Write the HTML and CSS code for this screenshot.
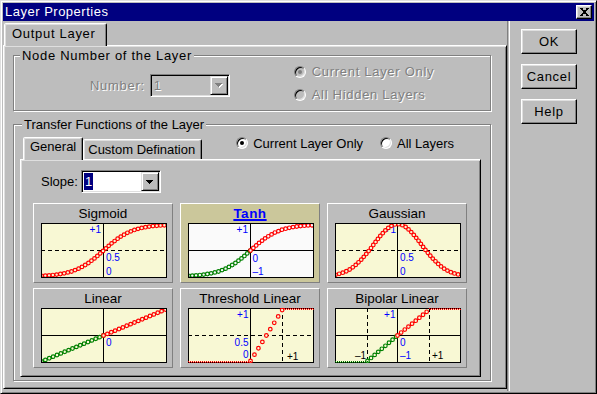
FILE: index.html
```html
<!DOCTYPE html>
<html lang="en">
<head>
<meta charset="utf-8">
<title>Layer Properties</title>
<link rel="stylesheet" href="styles.css">
</head>
<body>
<div class="window">
  <div class="titlebar">
    <span class="title">Layer Properties</span>
    <span class="close"><svg width="9" height="8" viewBox="0 0 9 8" class="px"><path d="M0 0h3v1H0zM6 0h3v1H6zM1 1h2v1H1zM6 1h2v1H6zM2 2h5v1H2zM3 3h3v2H3zM2 5h5v1H2zM1 6h2v1H1zM6 6h2v1H6zM0 7h3v1H0zM6 7h3v1H6z"/></svg></span>
  </div>
  <div class="body">
    <div class="main">
      <div class="tabstrip"><div class="tab bm">Output Layer</div></div>
      <div class="panel">
        <div class="group g1">
          <div class="legend bm">Node Number of the Layer</div>
          <div class="g1row">
            <div class="numfield">
              <span class="dis bm">Number:</span>
              <div class="combo off">
                <span class="val dis">1</span>
                <span class="dd"><svg width="8" height="5" viewBox="0 0 8 5" class="px"><path fill="#fff" d="M1 1h7v1H1zM2 2h5v1H2zM3 3h3v1H3zM4 4h1v1H4z"/><path fill="#808080" d="M0 0h7v1H0zM1 1h5v1H1zM2 2h3v1H2zM3 3h1v1H3z"/></svg></span>
              </div>
            </div>
            <div class="radios">
              <div class="radio"><span class="rc off on"></span><span class="dis bm">Current Layer Only</span></div>
              <div class="radio"><span class="rc off"></span><span class="dis bm">All Hidden Layers</span></div>
            </div>
          </div>
        </div>
        <div class="group g2">
          <div class="legend">Transfer Functions of the Layer</div>
          <div class="itabs">
            <div class="itab sel">General</div>
            <div class="itab other">Custom Defination</div>
            <div class="iradio a"><span class="rc on"></span><span>Current Layer Only</span></div>
            <div class="iradio b"><span class="rc"></span><span>All Layers</span></div>
          </div>
          <div class="ipanel">
            <div class="slope">
              <span>Slope:</span>
              <div class="combo">
                <span class="val"><span class="hl">1</span></span>
                <span class="dd"><svg width="7" height="4" viewBox="0 0 7 4" class="px"><path d="M0 0h7v1H0zM1 1h5v1H1zM2 2h3v1H2zM3 3h1v1H3z"/></svg></span>
              </div>
            </div>
            <div class="grid">
              <div class="card">
                <div class="ctitle">Sigmoid</div>
                <svg class="chart" width="126" height="55" viewBox="0 0 126 55">
                  <path class="ax" d="M62.5 0V55"/>
                  <path class="ax dash" d="M0 27.5H126"/>
                  <text class="lbl" x="60" y="9.5" text-anchor="end">+1</text>
                  <text class="lbl" x="65" y="38">0.5</text>
                  <text class="lbl" x="65" y="52">0</text>
                  <polyline class="ring r" points="0.5,52.8 6.5,52.5 14.5,51.8 22.5,50.5 30.5,48.5 38.5,45.3 46.5,40.7 54.5,34.6 62.5,27.5 70.5,20.4 78.5,14.3 86.5,9.7 94.5,6.5 102.5,4.5 110.5,3.2 118.5,2.5 124.5,2.2"/>
                  <polyline class="hole" points="0.5,52.8 6.5,52.5 14.5,51.8 22.5,50.5 30.5,48.5 38.5,45.3 46.5,40.7 54.5,34.6 62.5,27.5 70.5,20.4 78.5,14.3 86.5,9.7 94.5,6.5 102.5,4.5 110.5,3.2 118.5,2.5 124.5,2.2"/>
                  <rect class="bd" x="0.5" y="0.5" width="125" height="54"/>
                </svg>
              </div>
              <div class="card on">
                <div class="ctitle"><span>Tanh</span></div>
                <svg class="chart" width="126" height="55" viewBox="0 0 126 55">
                  <path class="ax" d="M62.5 0V55"/>
                  <path class="ax" d="M0 27.5H126"/>
                  <text class="lbl" x="60" y="9.5" text-anchor="end">+1</text>
                  <text class="lbl" x="64.5" y="39">0</text>
                  <text class="lbl" x="64.5" y="52">–1</text>
                  <polyline class="ring g" points="0.5,52.8 6.5,52.5 14.5,51.8 22.5,50.5 30.5,48.5 38.5,45.3 46.5,40.7 54.5,34.6 62.5,27.5"/>
                  <polyline class="hole" points="0.5,52.8 6.5,52.5 14.5,51.8 22.5,50.5 30.5,48.5 38.5,45.3 46.5,40.7 54.5,34.6 62.5,27.5"/>
                  <polyline class="ring r" points="62.5,27.5 70.5,20.4 78.5,14.3 86.5,9.7 94.5,6.5 102.5,4.5 110.5,3.2 118.5,2.5 124.5,2.2"/>
                  <polyline class="hole" points="62.5,27.5 70.5,20.4 78.5,14.3 86.5,9.7 94.5,6.5 102.5,4.5 110.5,3.2 118.5,2.5 124.5,2.2"/>
                  <rect class="bd" x="0.5" y="0.5" width="125" height="54"/>
                </svg>
              </div>
              <div class="card">
                <div class="ctitle">Gaussian</div>
                <svg class="chart" width="126" height="55" viewBox="0 0 126 55">
                  <path class="ax" d="M62.5 0V55"/>
                  <path class="ax dash" d="M0 27.5H126"/>
                  <text class="lbl" x="61" y="9.5" text-anchor="end">+1</text>
                  <text class="lbl" x="65" y="38">0.5</text>
                  <text class="lbl" x="65" y="52">0</text>
                  <polyline class="ring r" points="0.5,51.8 6.5,50.2 10.5,48.7 14.5,46.6 18.5,43.8 22.5,40.3 26.5,36.4 30.5,31.9 34.5,27 38.5,21.7 42.5,16.4 46.5,11.5 50.5,7.2 54.5,3.9 58.5,1.7 62.5,1 66.5,1.7 70.5,3.9 74.5,7.2 78.5,11.5 82.5,16.4 86.5,21.7 90.5,27 94.5,31.9 98.5,36.4 102.5,40.3 106.5,43.8 110.5,46.6 114.5,48.7 118.5,50.2 124.5,51.8"/>
                  <polyline class="hole" points="0.5,51.8 6.5,50.2 10.5,48.7 14.5,46.6 18.5,43.8 22.5,40.3 26.5,36.4 30.5,31.9 34.5,27 38.5,21.7 42.5,16.4 46.5,11.5 50.5,7.2 54.5,3.9 58.5,1.7 62.5,1 66.5,1.7 70.5,3.9 74.5,7.2 78.5,11.5 82.5,16.4 86.5,21.7 90.5,27 94.5,31.9 98.5,36.4 102.5,40.3 106.5,43.8 110.5,46.6 114.5,48.7 118.5,50.2 124.5,51.8"/>
                  <rect class="bd" x="0.5" y="0.5" width="125" height="54"/>
                </svg>
              </div>
              <div class="card">
                <div class="ctitle">Linear</div>
                <svg class="chart" width="126" height="55" viewBox="0 0 126 55">
                  <path class="ax" d="M62.5 0V55"/>
                  <path class="ax" d="M0 27.5H126"/>
                  <text class="lbl" x="65" y="38">0</text>
                  <path class="ring g lin" d="M0.5 53.5L62.5 27.5"/>
                  <path class="hole lin" d="M0.5 53.5L62.5 27.5"/>
                  <path class="ring r lin" d="M62.5 27.5L124.5 1.5"/>
                  <path class="hole lin" d="M62.5 27.5L124.5 1.5"/>
                  <rect class="bd" x="0.5" y="0.5" width="125" height="54"/>
                </svg>
              </div>
              <div class="card">
                <div class="ctitle">Threshold Linear</div>
                <svg class="chart" width="126" height="55" viewBox="0 0 126 55">
                  <path class="ax" d="M62.5 0V55"/>
                  <path class="ax dash" d="M0 27.5H126"/>
                  <path class="ax dash" d="M94.5 0V55"/>
                  <text class="lbl" x="60.5" y="10" text-anchor="end">+1</text>
                  <text class="lbl" x="60.5" y="38" text-anchor="end">0.5</text>
                  <text class="lbl" x="60.5" y="50" text-anchor="end">0</text>
                  <text class="lbl k" x="99" y="52">+1</text>
                  <rect class="bd" x="0.5" y="0.5" width="125" height="54"/>
                  <path class="ring r thr" d="M62.5 53L94.5 1.5"/>
                  <path class="hole thr" d="M62.5 53L94.5 1.5"/>
                  <path class="chk r" d="M0 53.5H63"/>
                  <path class="chk r o" d="M0 54.5H63"/>
                  <path class="chk r" d="M94 0.5H126"/>
                  <path class="chk r o" d="M94 1.5H126"/>
                </svg>
              </div>
              <div class="card">
                <div class="ctitle">Bipolar Linear</div>
                <svg class="chart" width="126" height="55" viewBox="0 0 126 55">
                  <path class="ax" d="M62.5 0V55"/>
                  <path class="ax" d="M0 27.5H126"/>
                  <path class="ax dash" d="M32.5 0V55"/>
                  <path class="ax dash" d="M94.5 0V55"/>
                  <text class="lbl" x="60.5" y="10" text-anchor="end">+1</text>
                  <text class="lbl" x="65" y="38">0</text>
                  <text class="lbl" x="65" y="51">–1</text>
                  <text class="lbl k" x="31" y="51" text-anchor="end">–1</text>
                  <text class="lbl k" x="97" y="51">+1</text>
                  <rect class="bd" x="0.5" y="0.5" width="125" height="54"/>
                  <path class="ring g bip" d="M32.5 53L62.5 27.5"/>
                  <path class="hole bip" d="M32.5 53L62.5 27.5"/>
                  <path class="ring r bip" d="M62.5 27.5L94.5 1.5"/>
                  <path class="hole bip" d="M62.5 27.5L94.5 1.5"/>
                  <path class="chk g" d="M0 53.5H33"/>
                  <path class="chk g o" d="M0 54.5H33"/>
                  <path class="chk r" d="M94 0.5H126"/>
                  <path class="chk r o" d="M94 1.5H126"/>
                </svg>
              </div>
            </div>
          </div>
        </div>
      </div>
    </div>
    <div class="side">
      <div class="btn bm">OK</div>
      <div class="btn bm">Cancel</div>
      <div class="btn bm">Help</div>
    </div>
  </div>
</div>
</body>
</html>
```

FILE: styles.css
```css
* { box-sizing: border-box; }
html, body { margin: 0; padding: 0; }
body {
  width: 597px; height: 394px; overflow: hidden;
  background: #bdbdbd;
  font-family: "Liberation Sans", Arial, sans-serif;
  font-size: 13px; color: #000;
}
.window {
  width: 597px; height: 394px;
  display: flex; flex-direction: column;
  border: 1px solid; border-color: #dfdfdf #000 #000 #dfdfdf;
  box-shadow: inset 1px 1px #fff, inset -1px -1px #808080;
  padding: 2px;
}
.px { display: block; shape-rendering: crispEdges; }
.bm { letter-spacing: .7px; }
.dis { color: #808080; text-shadow: 1px 1px 0 #fff; }

/* title bar */
.titlebar {
  height: 18px; flex: none;
  display: flex; align-items: center; justify-content: space-between;
  background: #000080; color: #fff;
  padding: 0 2px; line-height: 18px; letter-spacing: .5px;
}
.close {
  width: 16px; height: 14px;
  background: #bdbdbd;
  border: 1px solid; border-color: #fff #000 #000 #fff;
  box-shadow: inset -1px -1px #808080, inset 1px 1px #dfdfdf;
  display: flex; align-items: center; justify-content: center;
}

.body { flex: 1; display: flex; min-height: 0; }
.main {
  width: 505px; flex: none;
  display: flex; flex-direction: column;
  border-right: 1px solid #808080;
  padding: 2px 0 2px 0;
}
.side {
  flex: 1; margin-left: 1px; border-left: 1px solid #fff;
  padding: 8px 0 0 11px;
  display: flex; flex-direction: column; gap: 10px;
}
.btn {
  width: 56px; height: 25px;
  display: flex; align-items: center; justify-content: center;
  border: 1px solid; border-color: #fff #000 #000 #fff;
  box-shadow: inset -1px -1px #808080, inset 1px 1px #dfdfdf;
}

/* outer tab */
.tabstrip { height: 22px; flex: none; display: flex; padding-left: 1px; }
.tab {
  height: 23px; margin-bottom: -1px;
  position: relative; z-index: 1;
  background: #bdbdbd;
  border: 1px solid; border-bottom: 0;
  border-color: #fff #000 transparent #fff;
  border-radius: 2px 2px 0 0;
  box-shadow: inset -1px 0 #808080, inset 1px 1px #dfdfdf;
  line-height: 20px; padding: 0 10px 0 7px;
}
.panel {
  flex: 1; display: flex; flex-direction: column;
  border: 1px solid; border-color: #fff #000 #000 #fff;
  box-shadow: inset 1px 1px #dfdfdf, inset -1px -1px #808080;
  padding: 9px 15px 7px 9px;
}

/* group boxes */
.group { border: 1px solid #808080; box-shadow: inset 1px 1px #fff, 1px 1px #fff; }
.legend {
  width: fit-content; margin-top: -8px;
  line-height: 16px; background: #bdbdbd; padding: 0 2px;
}
.g1 { height: 56px; flex: none; }
.g1 .legend { margin-left: 6px; }
.g1row { display: flex; align-items: flex-start; }
.numfield { display: flex; align-items: center; gap: 5px; margin: 10px 0 0 76px; }
.radios { display: flex; flex-direction: column; gap: 7px; margin-left: 64px; }
.radio { display: flex; align-items: center; gap: 6px; height: 16px; line-height: 16px; }

/* radio circle */
.rc {
  width: 12px; height: 12px; flex: none;
  border-radius: 50%;
  border: 1px solid; border-color: #808080 #fff #fff #808080;
  box-shadow: inset 1px 1px #000, inset -1px -1px #dfdfdf;
  background: #fff;
  display: flex; align-items: center; justify-content: center;
}
.rc.on::after { content: ""; width: 4px; height: 4px; border-radius: 50%; background: #000; }
.rc.off { background: #bdbdbd; }
.rc.off.on::after { background: #808080; }

/* combo */
.combo {
  width: 80px; height: 23px;
  display: flex;
  border: 1px solid; border-color: #808080 #fff #fff #808080;
  box-shadow: inset 1px 1px #000, inset -1px -1px #dfdfdf;
  padding: 1px; background: #fff;
}
.combo.off { background: #bdbdbd; }
.combo .val { flex: 1; display: flex; align-items: center; padding-left: 1px; line-height: 17px; }
.combo.off .val { padding-left: 2px; }
.hl { background: #000080; color: #fff; padding: 0 1px; }
.dd {
  width: 18px; height: 19px; flex: none;
  background: #bdbdbd;
  border: 1px solid; border-color: #dfdfdf #000 #000 #dfdfdf;
  box-shadow: inset 1px 1px #fff, inset -1px -1px #808080;
  display: flex; align-items: center; justify-content: center;
}

/* group 2 */
.g2 { flex: 1; margin-top: 13px; padding: 0 9px 3px 6px; display: flex; flex-direction: column; }
.g2 .legend { margin-left: 2px; }
.itabs { display: flex; align-items: flex-end; margin-top: 4px; height: 22px; flex: none; padding-left: 3px; }
.itab {
  background: #bdbdbd;
  border: 1px solid; border-bottom: 0;
  border-color: #fff #000 transparent #fff;
  border-radius: 2px 2px 0 0;
  box-shadow: inset -1px 0 #808080, inset 1px 1px #dfdfdf;
}
.itab.sel { height: 23px; margin-bottom: -1px; position: relative; z-index: 1; line-height: 18px; padding: 0 6px; }
.itab.other { height: 20px; line-height: 19px; padding: 0 6px 0 4px; }
.iradio { align-self: flex-start; display: flex; align-items: center; gap: 5px; height: 12px; line-height: 13px; }
.iradio.a { margin-left: 34px; }
.iradio.b { margin-left: 17px; }

.ipanel {
  flex: 1;
  border: 1px solid; border-color: #fff #000 #000 #fff;
  box-shadow: inset 1px 1px #dfdfdf, inset -1px -1px #808080;
  padding: 10px 0 0 12px;
}
.slope { display: flex; align-items: center; gap: 3px; margin-left: 8px; height: 23px; }
.grid {
  display: grid;
  grid-template-columns: repeat(3, 140px);
  grid-auto-rows: 80px;
  column-gap: 7px; row-gap: 5px;
  margin-top: 10px;
}
.card {
  border: 1px solid; border-color: #fff #808080 #808080 #fff;
  display: flex; flex-direction: column;
}
.ctitle { height: 19px; line-height: 19px; text-align: center; font-size: 13.5px; }
.chart { display: block; margin-left: 7px; background: #f8f8d4; }
.card.on { background: #cbc79b; }
.card.on .ctitle span {
  color: #0000ff; font-weight: bold; letter-spacing: .5px;
  text-decoration: underline; text-decoration-thickness: 2px; text-underline-offset: 1px;
}
.card.on .chart { background: #fafafa; }

/* chart drawing */
.ax { fill: none; stroke: #000; stroke-width: 1; }
.dash { stroke-dasharray: 4 3; }
.bd { fill: none; stroke: #000; stroke-width: 1; }
.lbl { font-family: "Liberation Sans", Arial, sans-serif; font-size: 10px; fill: #0000ff; }
.lbl.k { fill: #000; }
.ring { fill: none; stroke-width: 4.8; stroke-linecap: round; stroke-linejoin: round; stroke-dasharray: 0 3.8; }
.hole { fill: none; stroke: #f8f8d4; stroke-width: 2.4; stroke-linecap: round; stroke-linejoin: round; stroke-dasharray: 0 3.8; }
.on .hole { stroke: #fafafa; }
.r { stroke: #f00; }
.g { stroke: #008000; }
.ring.lin, .hole.lin { stroke-dasharray: 0 4.2; }
.ring.thr, .hole.thr { stroke-dasharray: 0 7.5; }
.ring.bip, .hole.bip { stroke-dasharray: 0 4.7; }
.chk { fill: none; stroke-width: 1; stroke-dasharray: 1 1; shape-rendering: crispEdges; }
.chk.o { stroke-dashoffset: 1; }
```
